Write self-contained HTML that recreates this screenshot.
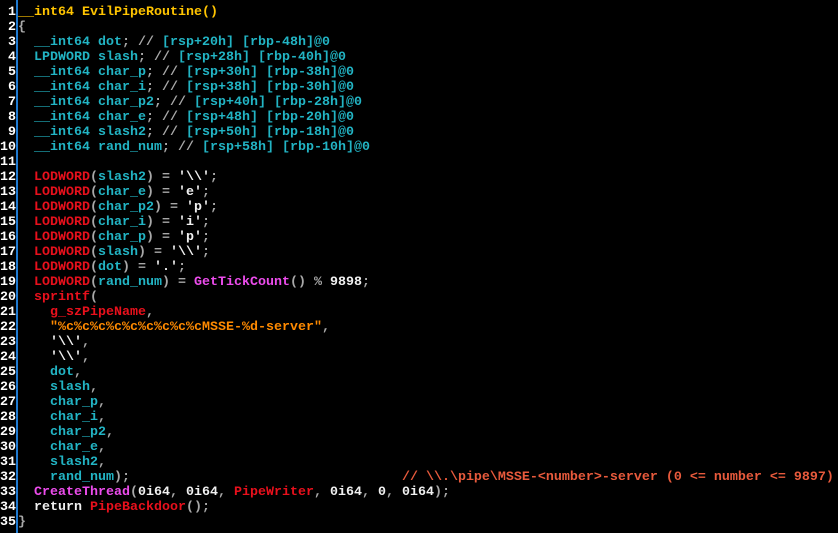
<!DOCTYPE html>
<html><head><meta charset="utf-8"><style>
html,body{margin:0;padding:0;background:#000;width:838px;height:533px;overflow:hidden}
body{font-family:"Liberation Mono",monospace;font-weight:bold;font-size:13.33px;line-height:15px;color:#e8e8e8}
#g{position:absolute;left:0;top:5px;width:16px;text-align:right;color:#fff}
#sep{position:absolute;left:16px;top:0;width:2px;height:533px;background:#1f7ad0}
#c{position:absolute;left:18px;top:5px;white-space:pre}
.y{color:#ffc400}.c{color:#22b4c4}.p{color:#a8a8a8}.r{color:#e8101c}.m{color:#ec4cec}.o{color:#ff8a00}.k{color:#e85a3c}.w{color:#f0f0f0}
</style></head><body>
<div id="g">1<br>2<br>3<br>4<br>5<br>6<br>7<br>8<br>9<br>10<br>11<br>12<br>13<br>14<br>15<br>16<br>17<br>18<br>19<br>20<br>21<br>22<br>23<br>24<br>25<br>26<br>27<br>28<br>29<br>30<br>31<br>32<br>33<br>34<br>35</div>
<div id="sep"></div>
<div id="c"><span class="y">__int64 EvilPipeRoutine()</span>
<span class="p">{</span>
  <span class="c">__int64 dot</span><span class="p">; //</span> <span class="c">[rsp+20h] [rbp-48h]@0</span>
  <span class="c">LPDWORD slash</span><span class="p">; //</span> <span class="c">[rsp+28h] [rbp-40h]@0</span>
  <span class="c">__int64 char_p</span><span class="p">; //</span> <span class="c">[rsp+30h] [rbp-38h]@0</span>
  <span class="c">__int64 char_i</span><span class="p">; //</span> <span class="c">[rsp+38h] [rbp-30h]@0</span>
  <span class="c">__int64 char_p2</span><span class="p">; //</span> <span class="c">[rsp+40h] [rbp-28h]@0</span>
  <span class="c">__int64 char_e</span><span class="p">; //</span> <span class="c">[rsp+48h] [rbp-20h]@0</span>
  <span class="c">__int64 slash2</span><span class="p">; //</span> <span class="c">[rsp+50h] [rbp-18h]@0</span>
  <span class="c">__int64 rand_num</span><span class="p">; //</span> <span class="c">[rsp+58h] [rbp-10h]@0</span>

  <span class="r">LODWORD</span><span class="p">(</span><span class="c">slash2</span><span class="p">) =</span> <span class="w">'\\'</span><span class="p">;</span>
  <span class="r">LODWORD</span><span class="p">(</span><span class="c">char_e</span><span class="p">) =</span> <span class="w">'e'</span><span class="p">;</span>
  <span class="r">LODWORD</span><span class="p">(</span><span class="c">char_p2</span><span class="p">) =</span> <span class="w">'p'</span><span class="p">;</span>
  <span class="r">LODWORD</span><span class="p">(</span><span class="c">char_i</span><span class="p">) =</span> <span class="w">'i'</span><span class="p">;</span>
  <span class="r">LODWORD</span><span class="p">(</span><span class="c">char_p</span><span class="p">) =</span> <span class="w">'p'</span><span class="p">;</span>
  <span class="r">LODWORD</span><span class="p">(</span><span class="c">slash</span><span class="p">) =</span> <span class="w">'\\'</span><span class="p">;</span>
  <span class="r">LODWORD</span><span class="p">(</span><span class="c">dot</span><span class="p">) =</span> <span class="w">'.'</span><span class="p">;</span>
  <span class="r">LODWORD</span><span class="p">(</span><span class="c">rand_num</span><span class="p">) =</span> <span class="m">GetTickCount</span><span class="p">() %</span> <span class="w">9898</span><span class="p">;</span>
  <span class="r">sprintf</span><span class="p">(</span>
    <span class="r">g_szPipeName</span><span class="p">,</span>
    <span class="o">"%c%c%c%c%c%c%c%c%cMSSE-%d-server"</span><span class="p">,</span>
    <span class="w">'\\'</span><span class="p">,</span>
    <span class="w">'\\'</span><span class="p">,</span>
    <span class="c">dot</span><span class="p">,</span>
    <span class="c">slash</span><span class="p">,</span>
    <span class="c">char_p</span><span class="p">,</span>
    <span class="c">char_i</span><span class="p">,</span>
    <span class="c">char_p2</span><span class="p">,</span>
    <span class="c">char_e</span><span class="p">,</span>
    <span class="c">slash2</span><span class="p">,</span>
    <span class="c">rand_num</span><span class="p">);</span>                                  <span class="k">// \\.\pipe\MSSE-&lt;number&gt;-server (0 &lt;= number &lt;= 9897)</span>
  <span class="m">CreateThread</span><span class="p">(</span><span class="w">0i64</span><span class="p">,</span> <span class="w">0i64</span><span class="p">,</span> <span class="r">PipeWriter</span><span class="p">,</span> <span class="w">0i64</span><span class="p">,</span> <span class="w">0</span><span class="p">,</span> <span class="w">0i64</span><span class="p">);</span>
  <span class="w">return</span> <span class="r">PipeBackdoor</span><span class="p">();</span>
<span class="p">}</span></div>
</body></html>
